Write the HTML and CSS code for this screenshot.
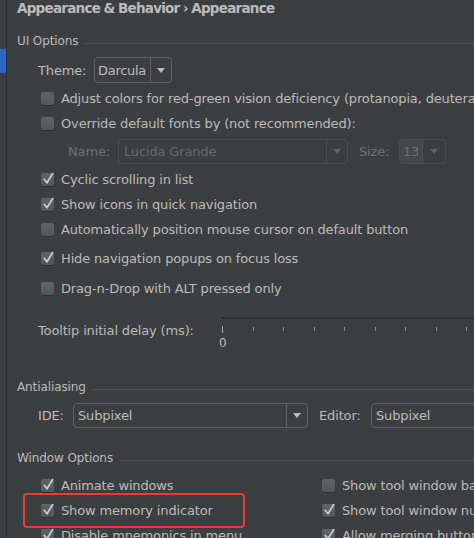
FILE: index.html
```html
<!DOCTYPE html>
<html>
<head>
<meta charset="utf-8">
<link rel="stylesheet" href="styles.css">
</head>
<body>
<div class="app">
  <aside class="sidebar"><div class="sel"></div></aside>
  <main class="main">
    <h1 class="title">Appearance &amp; Behavior › Appearance</h1>

    <div class="section s-ui"><span>UI Options</span><i></i></div>
    <div class="group">
      <div class="row theme-row">
        <span class="lbl w-theme">Theme:</span>
        <div class="combo c-theme"><span class="val">Darcula</span><span class="arr"><b></b></span></div>
      </div>
      <div class="cb first"><span class="box"></span><span>Adjust colors for red-green vision deficiency (protanopia, deuteranopia)</span></div>
      <div class="cb"><span class="box"></span><span>Override default fonts by (not recommended):</span></div>
      <div class="row name-row">
        <span class="lbl dis w-name">Name:</span>
        <div class="combo dis c-name"><span class="val">Lucida Grande</span><span class="arr"><b></b></span></div>
        <span class="lbl dis w-size">Size:</span>
        <div class="combo dis c-size"><span class="val edit">13</span><span class="arr"><b></b></span></div>
      </div>
      <div class="cb after-name"><span class="box"><svg viewBox="0 0 13 13"><path d="M3.2 6.3 L6 9.8 L11.6 0.6"/></svg></span><span>Cyclic scrolling in list</span></div>
      <div class="cb"><span class="box"><svg viewBox="0 0 13 13"><path d="M3.2 6.3 L6 9.8 L11.6 0.6"/></svg></span><span>Show icons in quick navigation</span></div>
      <div class="cb"><span class="box"></span><span>Automatically position mouse cursor on default button</span></div>
      <div class="cb hide-row"><span class="box"><svg viewBox="0 0 13 13"><path d="M3.2 6.3 L6 9.8 L11.6 0.6"/></svg></span><span>Hide navigation popups on focus loss</span></div>
      <div class="cb drag-row"><span class="box"></span><span>Drag-n-Drop with ALT pressed only</span></div>

      <div class="row tip-row">
        <span class="lbl w-tip">Tooltip initial delay (ms):</span>
        <div class="slider">
          <div class="track"></div>
          <div class="ticks">
            <i class="major"></i><i></i><i></i><i></i><i></i><i></i><i></i><i></i><i></i>
          </div>
          <div class="scale">0</div>
        </div>
      </div>
    </div>

    <div class="section s-aa"><span>Antialiasing</span><i></i></div>
    <div class="group">
      <div class="row aa-row">
        <span class="lbl w-ide">IDE:</span>
        <div class="combo c-ide"><span class="val">Subpixel</span><span class="arr"><b></b></span></div>
        <span class="lbl w-editor">Editor:</span>
        <div class="combo c-editor"><span class="val">Subpixel</span><span class="arr"><b></b></span></div>
      </div>
    </div>

    <div class="section s-win"><span>Window Options</span><i></i></div>
    <div class="group">
      <div class="win-grid">
        <div class="cb"><span class="box"><svg viewBox="0 0 13 13"><path d="M3.2 6.3 L6 9.8 L11.6 0.6"/></svg></span><span>Animate windows</span></div>
        <div class="cb"><span class="box"></span><span>Show tool window bars</span></div>
        <div class="cb marked"><span class="box"><svg viewBox="0 0 13 13"><path d="M3.2 6.3 L6 9.8 L11.6 0.6"/></svg></span><span>Show memory indicator</span></div>
        <div class="cb"><span class="box"><svg viewBox="0 0 13 13"><path d="M3.2 6.3 L6 9.8 L11.6 0.6"/></svg></span><span>Show tool window numbers</span></div>
        <div class="cb"><span class="box"><svg viewBox="0 0 13 13"><path d="M3.2 6.3 L6 9.8 L11.6 0.6"/></svg></span><span>Disable mnemonics in menu</span></div>
        <div class="cb"><span class="box"><svg viewBox="0 0 13 13"><path d="M3.2 6.3 L6 9.8 L11.6 0.6"/></svg></span><span>Allow merging buttons on dialogs</span></div>
      </div>
    </div>
  </main>
</div>
</body>
</html>
```
FILE: styles.css
```css
* { box-sizing: border-box; margin: 0; padding: 0; }
html, body {
  width: 474px;
  height: 538px;
  overflow: hidden;
  background: #3c3f41;
}
body {
  font-family: "DejaVu Sans", "Liberation Sans", sans-serif;
  font-size: 13px;
  letter-spacing: -0.15px;
  color: #bbbbbb;
}
.app { display: flex; height: 538px; }
.sidebar {
  width: 7px;
  flex: none;
  border-right: 1px solid #2d2f30;
  padding-top: 49px;
}
.sel { height: 24px; background: #2f65ca; }
.main {
  flex: 1;
  min-width: 0;
  padding-left: 10px;
  white-space: nowrap;
}
.title {
  font-size: 13.5px;
  font-weight: bold;
  line-height: 16px;
  height: 16px;
  letter-spacing: -0.75px;
  word-spacing: -0.5px;
}
.section {
  display: flex;
  align-items: center;
  height: 18px;
  font-size: 12px;
  letter-spacing: -0.1px;
}
.section i {
  flex: 1;
  height: 1px;
  background: #515557;
  margin-left: 7px;
  margin-top: 5px;
}
.s-ui { margin-top: 16px; }
.s-aa { margin-top: 28px; }
.s-win { margin-top: 21px; }
.group { padding-left: 21px; }
.row { display: flex; align-items: center; }
.lbl { flex: none; }
.dis { color: #6e7173; }

.theme-row { height: 26px; margin-top: 7px; }
.w-theme { width: 56px; }
.combo {
  display: flex;
  flex: none;
  height: 100%;
  border: 1px solid #5e6264;
  border-radius: 4px;
  overflow: hidden;
}
.combo .val {
  flex: 1;
  padding-left: 4px;
  display: flex;
  align-items: center;
  overflow: hidden;
}
.combo .arr {
  flex: none;
  width: 21px;
  border-left: 1px solid #5e6264;
  display: flex;
  align-items: center;
  justify-content: center;
}
.combo .arr b {
  width: 0;
  height: 0;
  border-left: 4px solid transparent;
  border-right: 4px solid transparent;
  border-top: 5px solid #bbbbbb;
}
.combo.dis { border-color: #4d5052; }
.combo.dis .arr { border-left-color: #4d5052; }
.combo.dis .arr b { border-top-color: #5f6264; }
.combo.dis .val { color: #66696b; }
.c-theme { width: 78px; }
.c-theme .val { padding-left: 3px; letter-spacing: -0.3px; }
.c-theme .arr { width: 21px; }

.cb {
  display: flex;
  align-items: center;
  gap: 7px;
  height: 25px;
  padding-left: 3px;
}
.cb.first { margin-top: 3px; }
.box {
  position: relative;
  flex: none;
  width: 13px;
  height: 13px;
  border-radius: 2px;
  background: linear-gradient(#616467, #54575a);
  box-shadow: 0 1px 0 #2c2e2f;
}
.box svg {
  position: absolute;
  left: 0;
  top: 0;
  width: 13px;
  height: 13px;
  overflow: visible;
  fill: none;
  stroke: #cfcfcf;
  stroke-width: 1.7;
  stroke-linecap: round;
  stroke-linejoin: round;
}

.name-row { height: 25px; margin-top: 3px; padding-left: 30px; }
.w-name { width: 50px; }
.c-name { width: 230px; }
.c-name .val { padding-left: 5px; }
.w-size { width: 40px; margin-left: 11px; }
.c-size { width: 47px; }
.c-size .val.edit { background: #45484a; padding-left: 3px; color: #6e7173; letter-spacing: -0.3px; }
.c-size .arr { width: 23px; }
.after-name { margin-top: 3px; }
.hide-row { margin-top: 4px; }
.drag-row { margin-top: 5px; }

.tip-row {
  align-items: flex-start;
  margin-top: 16px;
  height: 33px;
}
.w-tip { width: 184px; margin-top: 6px; line-height: 16px; }
.slider { flex: 1; min-width: 0; }
.track { height: 2px; background: #2b2c2d; margin-right: -20px; }
.ticks {
  display: flex;
  align-items: flex-start;
  gap: 29.5px;
  margin-top: 7px;
  height: 7px;
}
.ticks i {
  flex: none;
  width: 1px;
  height: 4px;
  margin-top: 1px;
  background: #8a8c8e;
}
.ticks i.major { height: 7px; margin-top: 0; background: #a9abad; }
.scale { margin-top: 3px; line-height: 14px; font-size: 12px; margin-left: -3px; }

.aa-row { height: 25px; margin-top: 7px; }
.w-ide { width: 35px; }
.c-ide { width: 235px; }
.w-editor { width: 52px; margin-left: 11px; }
.c-editor { width: 160px; }

.win-grid {
  display: grid;
  grid-template-columns: 281px 1fr;
  grid-auto-rows: 25px;
  margin-top: 6px;
}
.marked { position: relative; }
.marked::after {
  content: "";
  position: absolute;
  left: -15px;
  top: -5px;
  width: 218px;
  height: 31px;
  border: 2px solid #ec3a2c;
  border-radius: 4px;
}
```
